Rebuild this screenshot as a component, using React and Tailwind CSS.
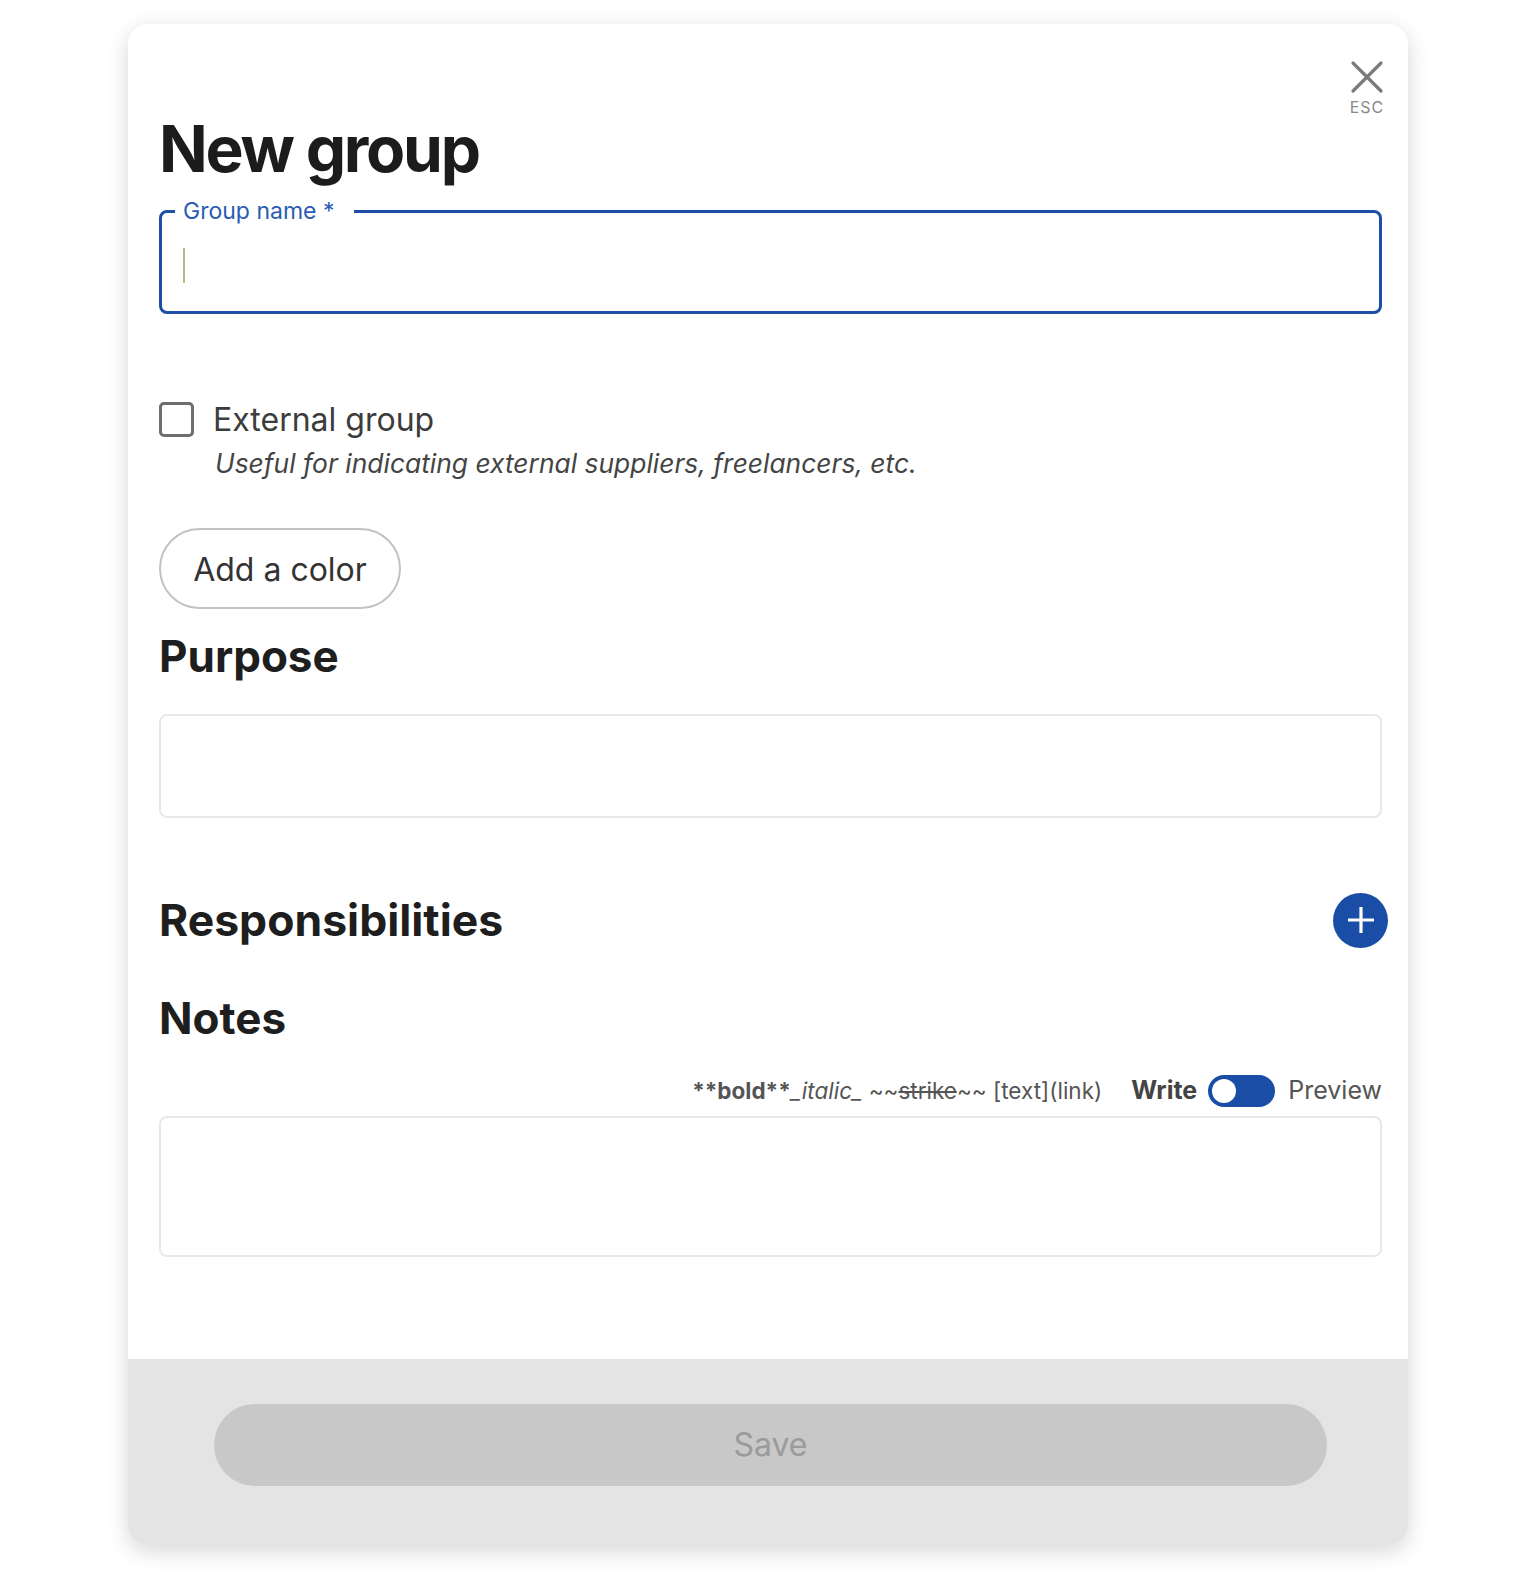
import React from "react";

export default function App() {
  const font = { fontFamily: "Inter, 'Noto Sans', sans-serif" };
  return (
    <div className="min-h-[1587px] w-full bg-white pt-[24px]" style={font}>
      <div className="relative mx-auto flex w-[1280px] flex-col overflow-hidden rounded-[20px] bg-white shadow-[0_6px_22px_rgba(0,0,0,0.16)]">
        {/* close */}
        <button className="absolute right-[23px] top-[36px] flex flex-col items-center text-[#7a7a7a]">
          <svg width="36" height="36" viewBox="0 0 36 36" fill="none">
            <path d="M4 3 L32 31 M32 3 L4 31" stroke="#7a7a7a" strokeWidth="3.2" strokeLinecap="round" />
          </svg>
          <span className="mt-[3px] text-[16px] leading-none tracking-[1px] text-[#8a8a8a]">ESC</span>
        </button>

        <div className="pb-[102px] pl-[31px] pr-[26px] pt-[93px]">
          <h1 className="text-[64px] font-bold leading-none tracking-[-0.035em] text-[#1c1c1c]">New group</h1>

          {/* Group name outlined field */}
          <div className="relative mt-[29px] h-[104px] rounded-[8px] border-[3px] border-[#1e4fa6] pl-[21px] pt-[35px]">
            <span className="absolute left-[13px] top-[-13px] bg-white pl-[8px] pr-[20px] text-[23px] leading-none text-[#2a5cb3]">
              Group name *
            </span>
            <span className="block h-[35px] w-[2px] bg-[#b7b68c]" />
          </div>

          {/* External group */}
          <div className="mt-[88px] flex items-center">
            <span className="block h-[35px] w-[35px] rounded-[5px] border-[3.5px] border-[#6e6e6e]" />
            <span className="ml-[19px] text-[32px] leading-[35px] text-[#3c3c3c]">External group</span>
          </div>
          <p className="mt-[11px] pl-[56px] text-[26.4px] italic leading-[1.2] text-[#444]">
            Useful for indicating external suppliers, freelancers, etc.
          </p>

          <button className="mt-[48px] flex h-[81px] w-[242px] items-center justify-center rounded-full border-2 border-[#c2c2c2] pt-[3px] text-[32px] text-[#333]">
            Add a color
          </button>

          <h2 className="mt-[25px] text-[44px] font-bold leading-none text-[#1e1e1e]">Purpose</h2>
          <div className="mt-[36px] h-[104px] rounded-[8px] border-2 border-[#e8e8e8]" />

          <div className="mt-[75px] flex h-[55px] items-center justify-between">
            <h2 className="text-[44.5px] font-bold leading-none text-[#1e1e1e]">Responsibilities</h2>
            <button className="mr-[-6px] flex h-[55px] w-[55px] items-center justify-center rounded-full bg-[#1a4ea6]">
              <svg width="28" height="28" viewBox="0 0 28 28">
                <path d="M14 1 V27 M1 14 H27" stroke="white" strokeWidth="3.2" />
              </svg>
            </button>
          </div>

          <h2 className="mt-[48px] text-[44px] font-bold leading-none text-[#1e1e1e]">Notes</h2>

          <div className="mt-[35px] flex h-[32px] items-center justify-end">
            <span className="text-[22.5px] text-[#555]">
              <span className="font-bold">**bold**</span>
              <span className="italic">_italic_</span>
              {" ~~"}
              <span className="line-through">strike</span>
              {"~~ [text](link)"}
            </span>
            <span className="ml-[29px] text-[25px] font-bold text-[#444]">Write</span>
            <span className="ml-[11px] flex h-[32px] w-[67px] items-center rounded-full bg-[#1a4ea6] pl-[4px]">
              <span className="block h-[24px] w-[24px] rounded-full bg-white" />
            </span>
            <span className="ml-[13px] text-[25px] text-[#555]">Preview</span>
          </div>
          <div className="mt-[9px] h-[141px] rounded-[8px] border-2 border-[#e8e8e8]" />
        </div>

        <div className="bg-[#e4e4e4] pb-[59px] pl-[86px] pr-[81px] pt-[45px]">
          <button className="flex h-[82px] w-full items-center justify-center rounded-full bg-[#c8c8c8] text-[32px] text-[#9b9b9b]">
            Save
          </button>
        </div>
      </div>
    </div>
  );
}
